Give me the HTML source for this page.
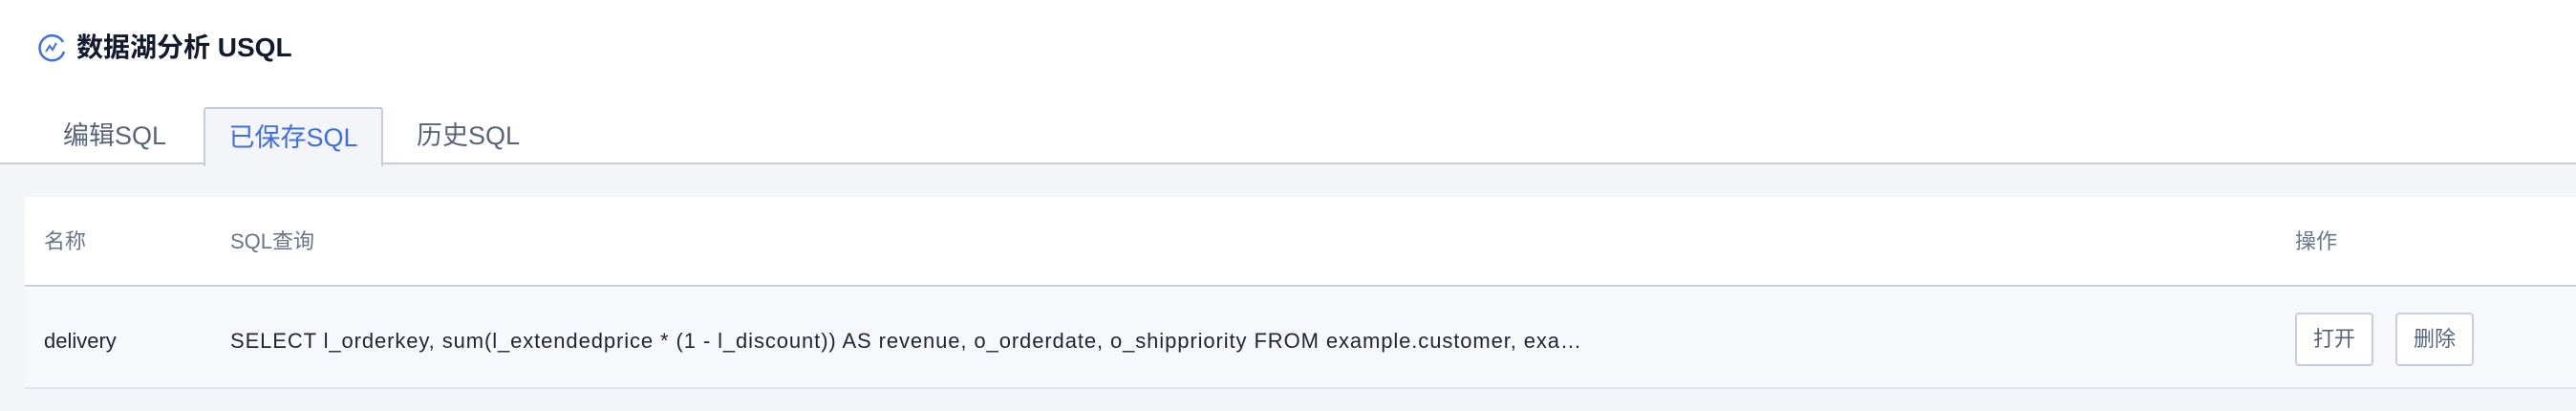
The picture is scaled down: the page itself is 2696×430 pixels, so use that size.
<!DOCTYPE html>
<html><head><meta charset="utf-8"><style>
*{margin:0;padding:0;box-sizing:border-box}
body{width:2696px;height:430px;background:#f3f5f9;font-family:"Liberation Sans","Noto Sans CJK SC",sans-serif;position:relative;overflow:hidden}
.top{position:absolute;left:0;top:0;width:2696px;height:172px;background:#fff;border-bottom:2px solid #c7cddb}
.title{position:absolute;left:80px;top:33px;font-size:28px;font-weight:bold;color:#121a2c;line-height:34px}
.icon{position:absolute;left:40px;top:35px}
.tab{position:absolute;top:112px;height:62px;font-size:27px;line-height:60px;color:#596479}
.tab.active{left:213px;width:188px;background:#f3f5f9;border:2px solid #c7cddb;border-bottom:none;color:#3d6fe0;text-align:center;border-radius:3px 3px 0 0}
.card{position:absolute;left:26px;top:206px;width:2670px;height:201px;background:#fff}
.hdr{position:absolute;top:0;left:0;right:0;height:94px;border-bottom:2px solid #c9cedc}
.row{position:absolute;top:96px;left:0;right:0;height:105px;background:#f6f8fc;border-bottom:2px solid #e1e5ee}
.h{position:absolute;top:34px;font-size:22px;color:#6a7587;line-height:26px}
.c{position:absolute;top:42px;font-size:22px;color:#1f2633;line-height:26px;white-space:nowrap}
.btn{position:absolute;top:25px;width:82px;height:56px;border:2px solid #c7cddb;border-radius:4px;background:#fff;font-size:22px;color:#596479;text-align:center;line-height:52px}
</style></head><body>
<div class="top">
<svg class="icon" width="30" height="30" viewBox="0 0 30 30"><path d="M26 9A13 13 0 1 0 27 19" fill="none" stroke="#3d6fe0" stroke-width="2.5"/><path d="M8 19l4-6 3 4 4-7" fill="none" stroke="#3d6fe0" stroke-width="2"/></svg>
<div class="title">数据湖分析 USQL</div>
<div class="tab" style="left:66px">编辑SQL</div>
<div class="tab active">已保存SQL</div>
<div class="tab" style="left:436px">历史SQL</div>
</div>
<div class="card">
<div class="hdr">
<div class="h" style="left:20px">名称</div>
<div class="h" style="left:215px">SQL查询</div>
<div class="h" style="left:2376px">操作</div>
</div>
<div class="row">
<div class="c" style="left:20px">delivery</div>
<div class="c" style="left:215px;letter-spacing:0.9px">SELECT l_orderkey, sum(l_extendedprice * (1 - l_discount)) AS revenue, o_orderdate, o_shippriority FROM example.customer, exa…</div>
<div class="btn" style="left:2376px">打开</div>
<div class="btn" style="left:2481px">删除</div>
</div>
</div>
</body></html>
